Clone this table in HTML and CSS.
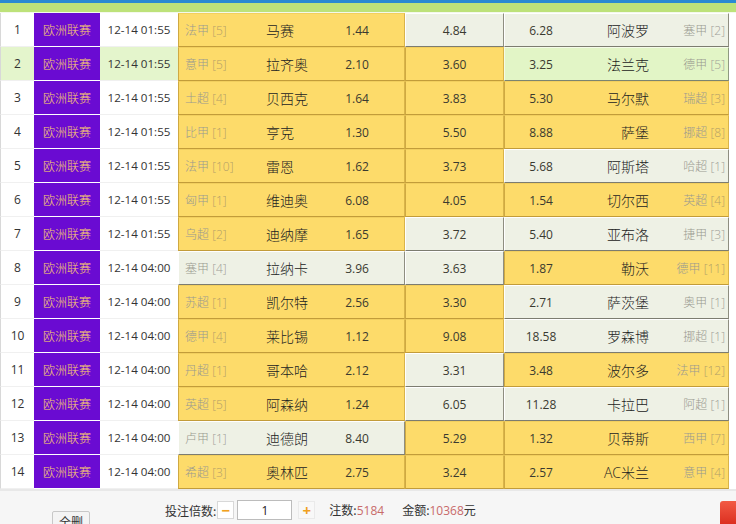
FILE: index.html
```html
<!DOCTYPE html>
<html lang="zh-CN">
<head>
<meta charset="utf-8">
<title>欧洲联赛</title>
<link rel="stylesheet" href="styles.css">
</head>
<body>
<div class="page">
  <div class="topbar"></div>
  <div class="list">
    <div class="row"><div class="idx">1</div><div class="lg">欧洲联赛</div><div class="tm">12-14 01:55</div><div class="opt home on"><span class="ol">法甲 <i>[5]</i></span><span class="team">马赛</span><span class="odds">1.44</span></div><div class="opt draw off"><span class="odds">4.84</span></div><div class="opt away off"><span class="odds">6.28</span><span class="team">阿波罗</span><span class="ol">塞甲 <i>[2]</i></span></div></div>
    <div class="row hover"><div class="idx">2</div><div class="lg">欧洲联赛</div><div class="tm">12-14 01:55</div><div class="opt home on"><span class="ol">意甲 <i>[5]</i></span><span class="team">拉齐奥</span><span class="odds">2.10</span></div><div class="opt draw on"><span class="odds">3.60</span></div><div class="opt away hov"><span class="odds">3.25</span><span class="team">法兰克</span><span class="ol">德甲 <i>[5]</i></span></div></div>
    <div class="row"><div class="idx">3</div><div class="lg">欧洲联赛</div><div class="tm">12-14 01:55</div><div class="opt home on"><span class="ol">土超 <i>[4]</i></span><span class="team">贝西克</span><span class="odds">1.64</span></div><div class="opt draw on"><span class="odds">3.83</span></div><div class="opt away on"><span class="odds">5.30</span><span class="team">马尔默</span><span class="ol">瑞超 <i>[3]</i></span></div></div>
    <div class="row"><div class="idx">4</div><div class="lg">欧洲联赛</div><div class="tm">12-14 01:55</div><div class="opt home on"><span class="ol">比甲 <i>[1]</i></span><span class="team">亨克</span><span class="odds">1.30</span></div><div class="opt draw on"><span class="odds">5.50</span></div><div class="opt away on"><span class="odds">8.88</span><span class="team">萨堡</span><span class="ol">挪超 <i>[8]</i></span></div></div>
    <div class="row"><div class="idx">5</div><div class="lg">欧洲联赛</div><div class="tm">12-14 01:55</div><div class="opt home on"><span class="ol">法甲 <i>[10]</i></span><span class="team">雷恩</span><span class="odds">1.62</span></div><div class="opt draw on"><span class="odds">3.73</span></div><div class="opt away off"><span class="odds">5.68</span><span class="team">阿斯塔</span><span class="ol">哈超 <i>[1]</i></span></div></div>
    <div class="row"><div class="idx">6</div><div class="lg">欧洲联赛</div><div class="tm">12-14 01:55</div><div class="opt home on"><span class="ol">匈甲 <i>[1]</i></span><span class="team">维迪奥</span><span class="odds">6.08</span></div><div class="opt draw on"><span class="odds">4.05</span></div><div class="opt away on"><span class="odds">1.54</span><span class="team">切尔西</span><span class="ol">英超 <i>[4]</i></span></div></div>
    <div class="row"><div class="idx">7</div><div class="lg">欧洲联赛</div><div class="tm">12-14 01:55</div><div class="opt home on"><span class="ol">乌超 <i>[2]</i></span><span class="team">迪纳摩</span><span class="odds">1.65</span></div><div class="opt draw off"><span class="odds">3.72</span></div><div class="opt away off"><span class="odds">5.40</span><span class="team">亚布洛</span><span class="ol">捷甲 <i>[3]</i></span></div></div>
    <div class="row"><div class="idx">8</div><div class="lg">欧洲联赛</div><div class="tm">12-14 04:00</div><div class="opt home off"><span class="ol">塞甲 <i>[4]</i></span><span class="team">拉纳卡</span><span class="odds">3.96</span></div><div class="opt draw off"><span class="odds">3.63</span></div><div class="opt away on"><span class="odds">1.87</span><span class="team">勒沃</span><span class="ol">德甲 <i>[11]</i></span></div></div>
    <div class="row"><div class="idx">9</div><div class="lg">欧洲联赛</div><div class="tm">12-14 04:00</div><div class="opt home on"><span class="ol">苏超 <i>[1]</i></span><span class="team">凯尔特</span><span class="odds">2.56</span></div><div class="opt draw on"><span class="odds">3.30</span></div><div class="opt away off"><span class="odds">2.71</span><span class="team">萨茨堡</span><span class="ol">奥甲 <i>[1]</i></span></div></div>
    <div class="row"><div class="idx">10</div><div class="lg">欧洲联赛</div><div class="tm">12-14 04:00</div><div class="opt home on"><span class="ol">德甲 <i>[4]</i></span><span class="team">莱比锡</span><span class="odds">1.12</span></div><div class="opt draw on"><span class="odds">9.08</span></div><div class="opt away off"><span class="odds">18.58</span><span class="team">罗森博</span><span class="ol">挪超 <i>[1]</i></span></div></div>
    <div class="row"><div class="idx">11</div><div class="lg">欧洲联赛</div><div class="tm">12-14 04:00</div><div class="opt home on"><span class="ol">丹超 <i>[1]</i></span><span class="team">哥本哈</span><span class="odds">2.12</span></div><div class="opt draw off"><span class="odds">3.31</span></div><div class="opt away on"><span class="odds">3.48</span><span class="team">波尔多</span><span class="ol">法甲 <i>[12]</i></span></div></div>
    <div class="row"><div class="idx">12</div><div class="lg">欧洲联赛</div><div class="tm">12-14 04:00</div><div class="opt home on"><span class="ol">英超 <i>[5]</i></span><span class="team">阿森纳</span><span class="odds">1.24</span></div><div class="opt draw off"><span class="odds">6.05</span></div><div class="opt away off"><span class="odds">11.28</span><span class="team">卡拉巴</span><span class="ol">阿超 <i>[1]</i></span></div></div>
    <div class="row"><div class="idx">13</div><div class="lg">欧洲联赛</div><div class="tm">12-14 04:00</div><div class="opt home off"><span class="ol">卢甲 <i>[1]</i></span><span class="team">迪德朗</span><span class="odds">8.40</span></div><div class="opt draw on"><span class="odds">5.29</span></div><div class="opt away on"><span class="odds">1.32</span><span class="team">贝蒂斯</span><span class="ol">西甲 <i>[7]</i></span></div></div>
    <div class="row"><div class="idx">14</div><div class="lg">欧洲联赛</div><div class="tm">12-14 04:00</div><div class="opt home on"><span class="ol">希超 <i>[3]</i></span><span class="team">奥林匹</span><span class="odds">2.75</span></div><div class="opt draw on"><span class="odds">3.24</span></div><div class="opt away on"><span class="odds">2.57</span><span class="team">AC米兰</span><span class="ol">意甲 <i>[4]</i></span></div></div>
  </div>
  <div class="footer">
    <button class="clear">全删</button>
    <div class="ctrl">
      <span class="lbl">投注倍数:</span>
      <span class="step minus">−</span>
      <span class="mult">1</span>
      <span class="step plus">+</span>
      <span class="lbl stat count">注数:<em>5184</em></span>
      <span class="lbl stat amount">金额:<em>10368</em>元</span>
    </div>
    <div class="submit"></div>
  </div>
</div>
</body>
</html>
```
FILE: styles.css
```css
html, body {
  margin: 0;
  padding: 0;
  background: #ffffff;
  overflow: hidden;
}
.page {
  width: 736px;
  height: 524px;
  overflow: hidden;
  font-family: "Open Sans", "Noto Sans CJK SC", sans-serif;
  font-size: 12px;
  color: #333;
  background: #fff;
}
.topbar {
  height: 13px;
  background: linear-gradient(to bottom, #2a8ad2 0, #2a8ad2 3px, #bde27a 3px, #bde27a 12px, #f4f9ec 12px);
}
.list {
  display: flex;
  flex-direction: column;
}
.row {
  display: grid;
  grid-template-columns: 34px 66px 78px 227px 99px 225px;
  height: 34px;
}
.row > div {
  box-sizing: border-box;
  display: flex;
  align-items: center;
}
.idx {
  justify-content: center;
  background: #fff;
  border-bottom: 1px solid #f0f0f0;
  border-left: 1px solid #d8d8d8;
  color: #333;
}
.lg {
  justify-content: center;
  background: #6a0bd2;
  color: #ffd36a;
  border-bottom: 1px solid #fff;
  font-size: 12px;
  font-weight: 300;
}
.tm {
  justify-content: center;
  background: #fff;
  border-bottom: 1px solid #f0f0f0;
  font-size: 11.6px;
  color: #333;
}
.hover .idx, .hover .tm {
  background: #e4f5cc;
}
.opt {
  border: 1px solid;
}
.on {
  background: #fddb6a;
  border-color: #f2cf5e #d9b44a #c29c3a #cfa942 !important;
}
.off {
  background: #eef1e5;
  border-color: #ffffff #8e8e80 #7c7c70 #ffffff !important;
}
.hov {
  background: #e2f5c6;
  border-color: #f4fbe8 #8e9a80 #7c8470 #f4fbe8 !important;
}
.odds {
  font-size: 12px;
  color: #3a3a30;
  text-align: center;
}
.team {
  font-size: 14px;
  color: #222;
  font-weight: 300;
}
.ol {
  color: #9a9a90;
  font-size: 12px;
  white-space: nowrap;
  font-weight: 300;
}
.ol i {
  font-style: normal;
  color: #b3a068;
}
.off .ol i, .hov .ol i {
  color: #a0a098;
}
.home {
  padding-left: 6px;
}
.home .ol {
  width: 81px;
}
.home .team {
  width: 70px;
}
.home .odds {
  width: 42px;
}
.draw {
  justify-content: center;
}
.away .odds {
  width: 72px;
}
.away .team {
  width: 72px;
  text-align: right;
}
.away .ol {
  flex: 1;
  text-align: right;
  padding-right: 3px;
}
.footer {
  height: 35px;
  box-sizing: border-box;
  border-top: 2px solid #e8e8e8;
  background: #f6f6f6;
  display: flex;
  align-items: flex-start;
  padding-left: 52px;
  overflow: hidden;
}
.clear {
  margin-top: 20px;
  width: 38px;
  height: 22px;
  padding: 0;
  border: 1px solid #c8c8c8;
  border-radius: 2px;
  background: #f4f4f4;
  font-family: "Noto Sans CJK SC", sans-serif;
  font-size: 12px;
  color: #333;
  line-height: 18px;
}
.ctrl {
  margin-left: 75px;
  margin-top: 9px;
  display: flex;
  align-items: center;
  height: 20px;
}
.lbl {
  font-family: "Noto Sans CJK SC", sans-serif;
  font-size: 12px;
  color: #333;
}
.step {
  box-sizing: border-box;
  width: 17px;
  height: 18px;
  display: flex;
  align-items: center;
  justify-content: center;
  color: #f0a020;
  font-weight: bold;
  font-size: 15px;
  line-height: 1;
  border: 1px solid #d8d8d8;
  background: #fff;
}
.minus {
  margin-left: 1px;
}
.plus {
  margin-left: 6px;
  border-color: #eaeaea;
  background: #f8f8f8;
}
.mult {
  box-sizing: border-box;
  width: 55px;
  height: 20px;
  margin-left: 3px;
  border: 1px solid #bcbcbc;
  background: #fff;
  display: flex;
  align-items: center;
  justify-content: center;
  font-size: 12px;
  color: #222;
}
.stat em {
  font-style: normal;
  color: #c86a6a;
  font-family: "Open Sans", sans-serif;
}
.count {
  margin-left: 14px;
}
.amount {
  margin-left: 18px;
}
.submit {
  margin-left: auto;
  margin-top: 10px;
  margin-right: -24px;
  width: 40px;
  height: 26px;
  border-radius: 3px;
  background: linear-gradient(to bottom, #f25a44, #d92a1c);
}
```
